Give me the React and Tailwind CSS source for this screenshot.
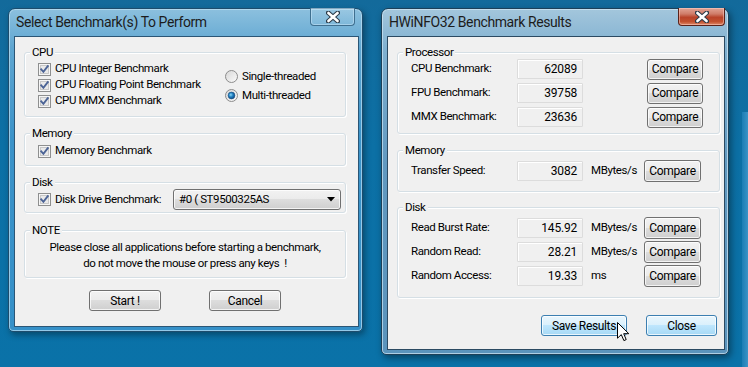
import React from "react";

const F = "font-['Roboto',sans-serif]";
const T = "text-[11.5px] tracking-[-0.4px]";

function CheckBox() {
  return (
    <svg width="13" height="13" viewBox="0 0 13 13" className="shrink-0">
      <rect x="0.5" y="0.5" width="12" height="12" fill="#f6f6f6" stroke="#8e8f8f" />
      <rect x="2" y="2" width="9" height="9" fill="#dcdcdc" />
      <rect x="2.5" y="2.5" width="8" height="8" fill="#e9e9e9" stroke="#c8c8c8" strokeWidth="1" />
      <path d="M3.2 6.3 L5.4 8.8 L9.8 3.2" stroke="#4c6496" strokeWidth="1.9" fill="none" strokeLinecap="square" />
    </svg>
  );
}

function Radio({ on }) {
  return (
    <svg width="13" height="13" viewBox="0 0 13 13" className="shrink-0">
      <defs>
        <linearGradient id="rg" x1="0" y1="0" x2="1" y2="1">
          <stop offset="0" stopColor="#d6d6d6" />
          <stop offset="1" stopColor="#fbfbfb" />
        </linearGradient>
        <radialGradient id="rdot" cx="0.4" cy="0.4" r="0.7">
          <stop offset="0" stopColor="#8fd9f8" />
          <stop offset="0.45" stopColor="#1f7fc0" />
          <stop offset="1" stopColor="#0b3f78" />
        </radialGradient>
      </defs>
      <circle cx="6.5" cy="6.5" r="6" fill="url(#rg)" stroke="#8c8c8c" />
      {on && <circle cx="6.5" cy="6.5" r="3.4" fill="url(#rdot)" stroke="#1b4d80" strokeWidth="0.6" />}
    </svg>
  );
}

function Group({ label, className, children }) {
  return (
    <div className={`relative rounded-[3px] border border-[#d5dfe5] shadow-[inset_1px_1px_0_#ffffff,1px_1px_0_#ffffff] ${className}`}>
      <span className={`absolute left-[5px] top-[-9px] bg-[#f0f0f0] px-[2px] leading-[16px] text-black ${T}`}>
        {label}
      </span>
      {children}
    </div>
  );
}

function Btn({ children, className, blue }) {
  const skin = blue
    ? "border-[#3c7fb1] bg-[linear-gradient(180deg,#eaf6fd_0%,#d9f0fc_50%,#bee6fd_50%,#a7d9f5_100%)]"
    : "border-[#707070] bg-[linear-gradient(180deg,#f2f2f2_0%,#ebebeb_50%,#dddddd_50%,#cfcfcf_100%)]";
  return (
    <div
      className={`flex items-center justify-center rounded-[3px] border ${skin} shadow-[inset_0_0_0_1px_rgba(255,255,255,0.75)] text-[12px] tracking-[-0.35px] text-black ${className}`}
    >
      {children}
    </div>
  );
}

function CloseX() {
  return (
    <svg width="14" height="12" viewBox="0 0 14 12">
      <path d="M2.2 1.8 L11.8 10.2 M11.8 1.8 L2.2 10.2" stroke="#2b3a48" strokeWidth="4.6" strokeLinecap="round" />
      <path d="M2.4 2 L11.6 10 M11.6 2 L2.4 10" stroke="#ffffff" strokeWidth="2.6" strokeLinecap="round" />
    </svg>
  );
}

function Val({ v }) {
  return (
    <div className="flex h-[20px] w-[66px] items-center justify-end rounded-[1px] border border-[#dcdcdc] bg-[#f0f0f0] pr-[5px] shadow-[inset_1px_1px_0_#ffffff] text-[12px] tracking-[-0.2px]">
      {v}
    </div>
  );
}

function Cursor() {
  return (
    <svg width="13" height="20" viewBox="0 0 13 20" className="absolute left-[617px] top-[322px]">
      <path d="M0.5 0.5 L0.5 16.2 L4.3 12.6 L6.9 18.6 L9.2 17.6 L6.7 11.7 L11.8 11.7 Z" fill="#ffffff" stroke="#000000" strokeWidth="1" strokeLinejoin="miter" />
    </svg>
  );
}

export default function App() {
  return (
    <div className={`relative h-[367px] w-[748px] overflow-hidden bg-[linear-gradient(180deg,#136a9b_0%,#0c70a5_40%,#0a72a8_100%)] ${F} text-black`}>
      {/* edge of another window at right */}
      <div className="absolute right-0 top-[112px] bottom-0 w-[6px] bg-[linear-gradient(90deg,#1b7db4,#3a93c6)]" />

      {/* Left window (inactive) */}
      <div className="absolute left-[8px] top-[8px] flex h-[324px] w-[355px] flex-col rounded-t-[7px] rounded-b-[5px] border border-[#1d4c6c] bg-[linear-gradient(180deg,#8cc0de_0%,#5fa6d1_12%,#3b93c9_40%,#3590c8_100%)] shadow-[inset_0_0_0_1px_rgba(190,225,245,0.7),2px_3px_6px_rgba(0,0,0,0.35)]">
        <div className="flex h-[27px] items-center pl-[7px] pb-[1px]">
          <span className="text-[14px] tracking-[-0.4px] text-[#1c1c1c]">Select Benchmark(s) To Perform</span>
        </div>
        <div className="absolute right-[7px] top-[-1px] flex h-[18px] w-[45px] items-center justify-center rounded-b-[4px] border border-t-0 border-[#3f6f8f] bg-[linear-gradient(180deg,rgba(255,255,255,0.12),rgba(255,255,255,0.03))] shadow-[inset_0_0_0_1px_rgba(200,230,248,0.55)]">
          <CloseX />
        </div>
        <div className="mb-[4px] ml-[5px] mr-[3px] flex flex-1 flex-col border border-[#2b5676] bg-[#f0f0f0] pl-[9px] pr-[12px]">
          <Group label="CPU" className="mt-[15px] h-[65px]">
            <div className="flex">
              <div className="flex w-[200px] flex-col pl-[13px] pt-[8px]">
                {["CPU Integer Benchmark", "CPU Floating Point Benchmark", "CPU MMX Benchmark"].map((t) => (
                  <div key={t} className={`flex h-[16px] items-center gap-[4px] ${T}`}>
                    <CheckBox />
                    <span>{t}</span>
                  </div>
                ))}
              </div>
              <div className="flex flex-col pt-[14px]">
                <div className={`flex h-[19px] items-center gap-[4px] ${T}`}>
                  <Radio />
                  <span>Single-threaded</span>
                </div>
                <div className={`flex h-[19px] items-center gap-[4px] ${T}`}>
                  <Radio on />
                  <span>Multi-threaded</span>
                </div>
              </div>
            </div>
          </Group>

          <Group label="Memory" className="mt-[16px] h-[33px]">
            <div className={`mt-[9px] flex h-[16px] items-center gap-[4px] pl-[13px] ${T}`}>
              <CheckBox />
              <span>Memory Benchmark</span>
            </div>
          </Group>

          <Group label="Disk" className="mt-[16px] h-[31px]">
            <div className="mt-[6px] flex h-[21px] items-center pl-[13px]">
              <div className={`flex w-[135px] items-center gap-[4px] ${T}`}>
                <CheckBox />
                <span>Disk Drive Benchmark:</span>
              </div>
              <div className={`flex h-[21px] w-[168px] items-center justify-between rounded-[3px] border border-[#707070] bg-[linear-gradient(180deg,#f2f2f2_0%,#ebebeb_50%,#dddddd_50%,#cfcfcf_100%)] pl-[5px] pr-[5px] shadow-[inset_0_0_0_1px_rgba(255,255,255,0.75)] ${T}`}>
                <span>#0 ( ST9500325AS</span>
                <svg width="8" height="5" viewBox="0 0 8 5">
                  <path d="M0 0 L8 0 L4 4.5 Z" fill="#000" />
                </svg>
              </div>
            </div>
          </Group>

          <Group label="NOTE" className="mt-[17px] h-[48px]">
            <div className={`flex flex-col items-center pt-[8px] leading-[16px] ${T}`}>
              <span>Please close all applications before starting a benchmark,</span>
              <span>do not move the mouse or press any keys&nbsp; !</span>
            </div>
          </Group>

          <div className="mt-[12px] flex justify-center gap-[48px]">
            <Btn className="h-[21px] w-[72px]">Start !</Btn>
            <Btn className="h-[21px] w-[72px]">Cancel</Btn>
          </div>
        </div>
      </div>

      {/* Right window (active) */}
      <div className="absolute left-[381px] top-[8px] flex h-[347px] w-[348px] flex-col rounded-t-[7px] rounded-b-[5px] border border-[#1d4058] bg-[linear-gradient(180deg,#a3c6dc_0%,#7fb0d0_12%,#6199c0_45%,#5b94bc_100%)] shadow-[inset_0_0_0_1px_rgba(210,232,245,0.7),2px_3px_7px_rgba(0,0,0,0.4)]">
        <div className="flex h-[27px] items-center pl-[7px] pb-[1px]">
          <span className="text-[14px] tracking-[-0.4px] text-[#1c1c1c]">HWiNFO32 Benchmark Results</span>
        </div>
        <div className="absolute right-[3px] top-[-1px] flex h-[18px] w-[47px] items-center justify-center rounded-b-[4px] border border-t-0 border-[#5a2219] bg-[linear-gradient(180deg,#e3a596_0%,#cf7c69_35%,#b9432a_55%,#c2512f_80%,#de8a6a_100%)] shadow-[inset_0_0_0_1px_rgba(255,210,200,0.5)]">
          <CloseX />
        </div>
        <div className="mb-[4px] ml-[5px] mr-[3px] flex flex-1 flex-col border border-[#2b4a62] bg-[#f0f0f0] pl-[9px] pr-[4px]">
          <Group label="Processor" className="mt-[15px] h-[82px]">
            <div className="flex flex-col pl-[13px] pt-[4px]">
              {[
                ["CPU Benchmark:", "62089"],
                ["FPU Benchmark:", "39758"],
                ["MMX Benchmark:", "23636"],
              ].map(([l, v]) => (
                <div key={l} className={`flex h-[24px] items-center ${T}`}>
                  <span className="w-[106px]">{l}</span>
                  <Val v={v} />
                  <Btn className="ml-[64px] h-[21px] w-[56px]">Compare</Btn>
                </div>
              ))}
            </div>
          </Group>

          <Group label="Memory" className="mt-[16px] h-[42px]">
            <div className="flex flex-col pl-[13px] pt-[8px]">
              <div className={`flex h-[24px] items-center ${T}`}>
                <span className="w-[106px]">Transfer Speed:</span>
                <Val v="3082" />
                <span className="ml-[8px] w-[53px]">MBytes/s</span>
                <Btn className="h-[22px] w-[57px]">Compare</Btn>
              </div>
            </div>
          </Group>

          <Group label="Disk" className="mt-[15px] h-[91px]">
            <div className="flex flex-col pl-[13px] pt-[8px]">
              {[
                ["Read Burst Rate:", "145.92", "MBytes/s"],
                ["Random Read:", "28.21", "MBytes/s"],
                ["Random Access:", "19.33", "ms"],
              ].map(([l, v, u]) => (
                <div key={l} className={`flex h-[24px] items-center ${T}`}>
                  <span className="w-[106px]">{l}</span>
                  <Val v={v} />
                  <span className="ml-[8px] w-[53px]">{u}</span>
                  <Btn className="h-[22px] w-[57px]">Compare</Btn>
                </div>
              ))}
            </div>
          </Group>

          <div className="mt-[17px] flex justify-end gap-[19px] pr-[3px]">
            <Btn blue className="h-[21px] w-[86px]">Save Results</Btn>
            <Btn blue className="h-[21px] w-[71px]">Close</Btn>
          </div>
        </div>
      </div>

      <Cursor />
    </div>
  );
}
